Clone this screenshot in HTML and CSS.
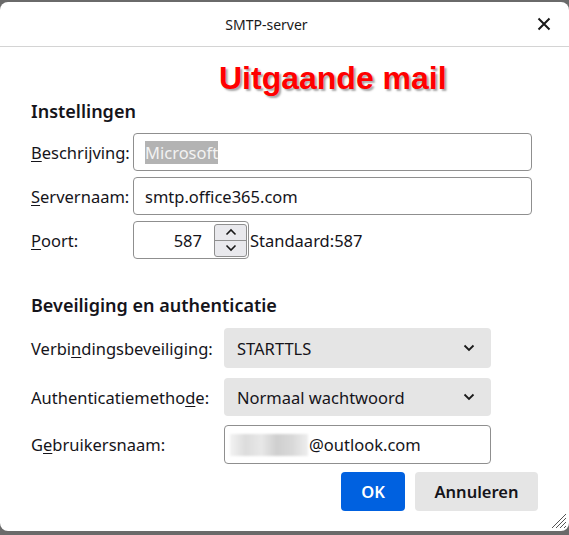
FILE: index.html
```html
<!DOCTYPE html>
<html lang="nl">
<head>
<meta charset="utf-8">
<title>SMTP-server</title>
<link rel="stylesheet" href="styles.css">
</head>
<body>
<div class="backdrop-top"></div>
<div class="dialog">
  <header class="titlebar">
    <span class="title">SMTP-server</span>
    <svg class="close" width="14" height="14" viewBox="0 0 14 14"><path d="M1.5 1.5 L12.5 12.5 M12.5 1.5 L1.5 12.5" stroke="#1a1a1a" stroke-width="2" fill="none"/></svg>
  </header>
  <main class="content">
    <div class="banner">Uitgaande mail</div>
    <h2 class="section">Instellingen</h2>
    <div class="grid1">
      <label class="lbl"><u>B</u>eschrijving:</label>
      <div class="field"><span class="sel">Microsoft</span></div>
      <label class="lbl"><u>S</u>ervernaam:</label>
      <div class="field">smtp.office365.com</div>
      <label class="lbl"><u>P</u>oort:</label>
      <div class="portrow">
        <div class="number">
          <span class="num">587</span>
          <div class="spin">
            <span class="sb"><svg width="12" height="8" viewBox="0 0 12 8"><path d="M1.5 6.5 L6 2 L10.5 6.5" stroke="#1a1a1a" stroke-width="1.6" fill="none"/></svg></span>
            <span class="sb sb2"><svg width="12" height="8" viewBox="0 0 12 8"><path d="M1.5 1.5 L6 6 L10.5 1.5" stroke="#1a1a1a" stroke-width="1.6" fill="none"/></svg></span>
          </div>
        </div>
        <span class="std">Standaard:587</span>
      </div>
    </div>
    <h2 class="section section2">Beveiliging en authenticatie</h2>
    <div class="grid2">
      <label class="lbl">Verbi<u>n</u>dingsbeveiliging:</label>
      <div class="select s1">STARTTLS<svg class="chev" width="12" height="8" viewBox="0 0 12 8"><path d="M1.5 1.5 L6 6 L10.5 1.5" stroke="#1a1a1a" stroke-width="1.8" fill="none"/></svg></div>
      <label class="lbl">Authenticatiemetho<u>d</u>e:</label>
      <div class="select s2">Normaal wachtwoord<svg class="chev" width="12" height="8" viewBox="0 0 12 8"><path d="M1.5 1.5 L6 6 L10.5 1.5" stroke="#1a1a1a" stroke-width="1.8" fill="none"/></svg></div>
      <label class="lbl">G<u>e</u>bruikersnaam:</label>
      <div class="field user"><span class="blur"></span>@outlook.com</div>
    </div>
    <div class="buttons">
      <button class="btn ok">OK</button>
      <button class="btn cancel">Annuleren</button>
    </div>
  </main>
  <svg class="grip" width="16" height="16" viewBox="0 0 16 16"><path d="M15 5 L5 15 M15 9 L9 15 M15 13 L13 15 M15 1 L1 15" stroke="#555" stroke-width="1" fill="none"/></svg>
</div>
</body>
</html>
```

FILE: styles.css
```css
html, body {
  margin: 0;
  padding: 0;
}
body {
  width: 569px;
  height: 535px;
  background: #6a6a6a;
  overflow: hidden;
  font-family: "Noto Sans", "Open Sans", sans-serif;
  color: #15141a;
}
.backdrop-top {
  height: 2px;
}
.dialog {
  position: relative;
  height: 529px;
  background: #fff;
  border-radius: 8px;
  display: flex;
  flex-direction: column;
}
.titlebar {
  height: 44px;
  border-bottom: 1px solid #d4d4d4;
  display: flex;
  align-items: center;
  justify-content: center;
  padding-right: 36px;
  position: relative;
}
.title {
  font-size: 14px;
  color: #1a1a1a;
}
.close {
  position: absolute;
  right: 18px;
  top: 15px;
}
.content {
  padding: 0 0 0 31px;
  display: flex;
  flex-direction: column;
}
.banner {
  margin: 13px 0 0 188px;
  font-family: "Liberation Sans", Arial, sans-serif;
  font-weight: bold;
  font-size: 32px;
  line-height: 36px;
  color: #ff0000;
  text-shadow: 2px 2px 2px rgba(0,0,0,0.35);
}
.section {
  margin: 4px 0 0;
  font-size: 18px;
  line-height: 22px;
  font-weight: 600;
}
.section2 {
  margin-top: 35px;
}
.grid1 {
  margin-top: 11px;
  display: grid;
  grid-template-columns: 102px 399px;
  row-gap: 6px;
  align-items: center;
}
.lbl {
  font-size: 16.5px;
  white-space: nowrap;
}
.lbl u {
  text-underline-offset: 2px;
}
.field {
  box-sizing: border-box;
  height: 38px;
  border: 1px solid #8f8f8f;
  border-radius: 4px;
  padding: 0 11px;
  display: flex;
  align-items: center;
  font-size: 16.5px;
  white-space: nowrap;
}
.sel {
  background: #b3b3b3;
  color: #f2f2f2;
}
.portrow {
  display: flex;
  align-items: center;
}
.number {
  box-sizing: border-box;
  width: 116px;
  height: 38px;
  border: 1px solid #8f8f8f;
  border-radius: 4px;
  display: flex;
  align-items: center;
  justify-content: flex-end;
  padding: 1px 1px;
}
.num {
  font-size: 16.5px;
  margin-right: 12px;
}
.spin {
  width: 33px;
  height: 33px;
  display: flex;
  flex-direction: column;
  border: 1px solid #8f8f8f;
  border-radius: 3px;
  background: #e9e9ed;
  box-sizing: border-box;
}
.sb {
  flex: 1;
  display: flex;
  align-items: center;
  justify-content: center;
}
.sb2 {
  border-top: 1px solid #8f8f8f;
}
.std {
  font-size: 16.5px;
  margin-left: 1px;
}
.grid2 {
  margin-top: 12px;
  display: grid;
  grid-template-columns: 193px 267px;
  align-items: center;
}
.select {
  box-sizing: border-box;
  height: 40px;
  border-radius: 4px;
  background: #e5e5e5;
  padding: 0 13px;
  display: flex;
  align-items: center;
  justify-content: space-between;
  font-size: 16.5px;
}
.s2 {
  margin-top: 10px;
  height: 38px;
}
.grid2 .lbl:nth-of-type(2) {
  margin-top: 10px;
}
.user {
  margin-top: 9px;
  height: 39px;
  padding-left: 5px;
}
.grid2 .lbl:nth-of-type(3) {
  margin-top: 9px;
}
.blur {
  display: inline-block;
  width: 78px;
  height: 22px;
  margin-right: 1px;
  background: linear-gradient(90deg, #f3f3f3 0%, #dcdcdc 20%, #e8e8e8 40%, #cfcfcf 60%, #d9d9d9 80%, #eeeeee 100%);
  filter: blur(1px);
}
.chev {
  margin-right: 3px;
}
.buttons {
  margin: 8px 0 0 310px;
  display: flex;
  gap: 10px;
}
.btn {
  height: 39px;
  border: none;
  border-radius: 4px;
  font-family: "Noto Sans", "Open Sans", sans-serif;
  font-size: 16.5px;
  font-weight: 600;
}
.ok {
  width: 64px;
  background: #0061e0;
  color: #fff;
}
.cancel {
  width: 123px;
  background: #e5e5e5;
  color: #15141a;
}
.grip {
  position: absolute;
  right: 2px;
  bottom: 2px;
}
```
